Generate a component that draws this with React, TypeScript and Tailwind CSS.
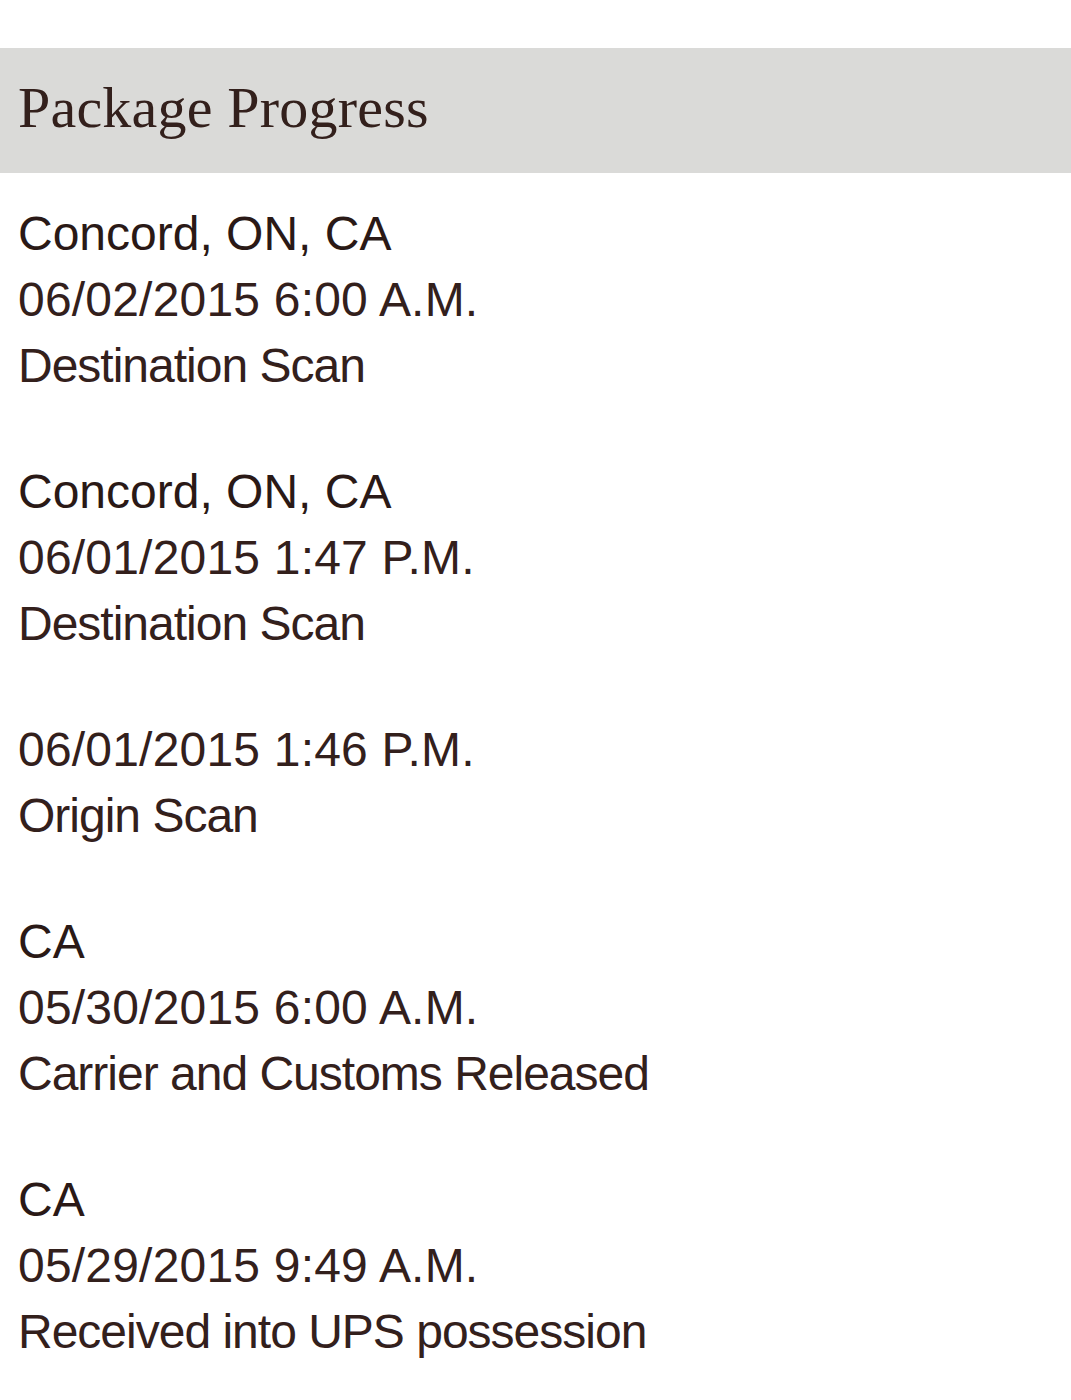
const EVENTS: { place?: string; when: string; what: string }[] = [
  { place: "Concord, ON, CA", when: "06/02/2015 6:00 A.M.", what: "Destination Scan" },
  { place: "Concord, ON, CA", when: "06/01/2015 1:47 P.M.", what: "Destination Scan" },
  { when: "06/01/2015 1:46 P.M.", what: "Origin Scan" },
  { place: "CA", when: "05/30/2015 6:00 A.M.", what: "Carrier and Customs Released" },
  { place: "CA", when: "05/29/2015 9:49 A.M.", what: "Received into UPS possession" },
];

export default function App() {
  return (
    <div className="min-h-[1400px] bg-white pt-[48px] text-[#33201c]">
      <div className="flex h-[125px] items-center bg-[#dadad8] px-[18px] pb-[6px]">
        <h1 className="font-['Liberation_Serif',serif] text-[58px] leading-none tracking-[0.2px]">
          Package Progress
        </h1>
      </div>

      <div className="flex flex-col gap-[60px] px-[18px] pt-[28px] font-['Liberation_Sans',Arial,sans-serif] text-[48px] leading-[66px]">
        {EVENTS.map((e) => (
          <div key={e.when} className="flex flex-col">
            {e.place && <div className="text-[#2a1916]">{e.place}</div>}
            <div className="tracking-[0.2px]">{e.when}</div>
            <div className="tracking-[-1px]">{e.what}</div>
          </div>
        ))}
      </div>
    </div>
  );
}
